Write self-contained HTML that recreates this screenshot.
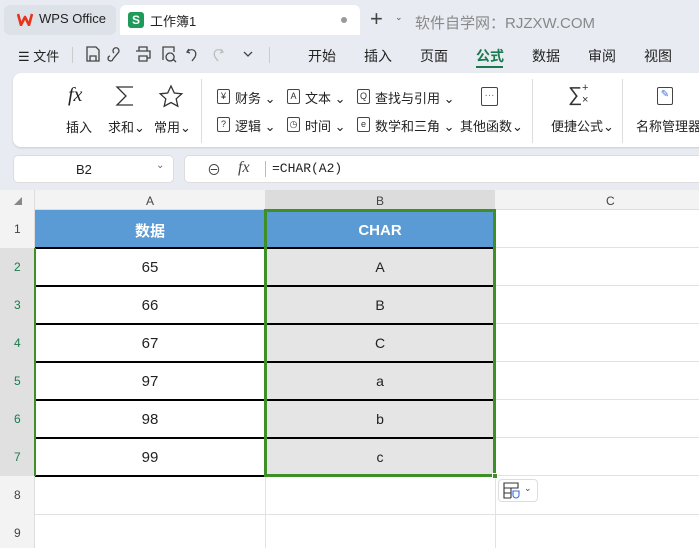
<!DOCTYPE html>
<html><head><meta charset="utf-8"><style>
*{box-sizing:border-box;margin:0;padding:0}
body{width:699px;height:548px;overflow:hidden;background:#e8ecf2;font-family:"Liberation Sans","Noto Sans CJK SC",sans-serif;position:relative;color:#222}
.a{position:absolute}
.t{font-size:13px;white-space:nowrap}
.cell{position:absolute;display:flex;align-items:center;justify-content:center;font-size:15px}
.ic{position:absolute;width:13px;height:15px;border:1px solid #444;border-radius:2px;font-size:9px;line-height:13px;text-align:center;color:#333}
</style></head><body>
<!-- tabs -->
<div class="a" style="left:4px;top:5px;width:112px;height:30px;background:#dde1e8;border-radius:6px"></div>
<svg class="a" style="left:17px;top:13px" width="16" height="13" viewBox="0 0 16 13"><path d="M1 1 L4 12 L8 4 L12 12 L15 1" fill="none" stroke="#e8341c" stroke-width="2.6" stroke-linejoin="round"/></svg>
<div class="a t" style="left:39px;top:11px;font-size:13px">WPS Office</div>
<div class="a" style="left:120px;top:5px;width:240px;height:30px;background:#fff;border-radius:6px 6px 0 0"></div>
<div class="a" style="left:128px;top:12px;width:16px;height:16px;background:#1f9a5a;border-radius:3px;color:#fff;font-size:12px;font-weight:bold;text-align:center;line-height:16px">S</div>
<div class="a t" style="left:150px;top:11px">工作簿1</div>
<div class="a" style="left:341px;top:17px;width:6px;height:6px;border-radius:3px;background:#999"></div>
<div class="a t" style="left:370px;top:6px;font-size:22px;color:#444">+</div>
<div class="a t" style="left:395px;top:12px;font-size:9px;color:#555">⌄</div>
<div class="a t" style="left:415px;top:12px;font-size:15px;color:#888">软件自学网：RJZXW.COM</div>
<!-- menu -->
<div class="a t" style="left:18px;top:46px">☰ 文件</div>
<div class="a" style="left:72px;top:47px;width:1px;height:16px;background:#ccc"></div>
<svg class="a" style="left:84px;top:44px" width="180" height="20" viewBox="0 0 180 20" fill="none" stroke="#444" stroke-width="1.3">
<path d="M3 3h9l3 3v11H3z M6 17v-5h6v5"/>
<path d="M30 9a3 3 0 1 1 4 0l-5 6a2.5 2.5 0 1 1-3-3"/>
<path d="M55 7V3h8v4 M52 7h14v7h-3 M55 12h8v5h-8z"/>
<path d="M79 16V3h11v5 M86 9a4 4 0 1 0 .1 0 M89 15l3 3"/>
<path d="M105 5l-2 3 3 1 M103 8c5-5 11-1 8 5l-3 4"/>
<path d="M137 5l2 3-3 1 M139 8c-5-5-11-1-8 5l3 4" stroke="#bbb"/>
<path d="M160 8l4 4 4-4"/>
</svg>
<div class="a" style="left:269px;top:47px;width:1px;height:16px;background:#ccc"></div>
<div class="a t" style="left:308px;top:46px;font-size:14px">开始</div>
<div class="a t" style="left:364px;top:46px;font-size:14px">插入</div>
<div class="a t" style="left:420px;top:46px;font-size:14px">页面</div>
<div class="a t" style="left:476px;top:46px;font-size:14px;font-weight:bold;color:#1a7a4c">公式</div>
<div class="a" style="left:476px;top:66px;width:27px;height:2px;background:#1a7a4c"></div>
<div class="a t" style="left:532px;top:46px;font-size:14px">数据</div>
<div class="a t" style="left:588px;top:46px;font-size:14px">审阅</div>
<div class="a t" style="left:644px;top:46px;font-size:14px">视图</div>
<!-- ribbon -->
<div class="a" style="left:13px;top:73px;width:700px;height:74px;background:#fff;border-radius:8px;box-shadow:0 1px 2px #ccc"></div>
<div class="a t" style="left:68px;top:84px;font-size:20px;font-style:italic;font-family:'Liberation Serif',serif">fx</div>
<svg class="a" style="left:114px;top:85px" width="22" height="22" viewBox="0 0 22 22" fill="none" stroke="#333" stroke-width="1.3"><path d="M19 2H3l9 9-9 9h16"/></svg>
<svg class="a" style="left:158px;top:84px" width="26" height="24" viewBox="0 0 26 24" fill="none" stroke="#333" stroke-width="1.3"><path d="M13 2l3.3 7 7.5.8-5.6 5 1.6 7.4L13 18.5l-6.8 3.7 1.6-7.4-5.6-5 7.5-.8z"/></svg>
<div class="a t" style="left:66px;top:117px">插入</div>
<div class="a t" style="left:108px;top:117px">求和⌄</div>
<div class="a t" style="left:154px;top:117px">常用⌄</div>
<div class="a" style="left:201px;top:79px;width:1px;height:64px;background:#ddd"></div>
<div class="ic" style="left:217px;top:89px">¥</div><div class="a t" style="left:235px;top:88px">财务 ⌄</div>
<div class="ic" style="left:287px;top:89px">A</div><div class="a t" style="left:305px;top:88px">文本 ⌄</div>
<div class="ic" style="left:357px;top:89px">Q</div><div class="a t" style="left:375px;top:88px">查找与引用 ⌄</div>
<div class="ic" style="left:217px;top:117px">?</div><div class="a t" style="left:235px;top:116px">逻辑 ⌄</div>
<div class="ic" style="left:287px;top:117px">◷</div><div class="a t" style="left:305px;top:116px">时间 ⌄</div>
<div class="ic" style="left:357px;top:117px">e</div><div class="a t" style="left:375px;top:116px">数学和三角 ⌄</div>
<div class="a" style="left:481px;top:87px;width:17px;height:19px;border:1px solid #444;border-radius:2px;color:#3a6fe0;font-size:10px;text-align:center;line-height:16px">···</div>
<div class="a t" style="left:460px;top:116px">其他函数⌄</div>
<div class="a" style="left:532px;top:79px;width:1px;height:64px;background:#ddd"></div>
<div class="a t" style="left:568px;top:84px;font-size:20px;color:#333">∑</div>
<div class="a t" style="left:582px;top:82px;font-size:11px;color:#333">+</div>
<div class="a t" style="left:582px;top:94px;font-size:11px;color:#333">×</div>
<div class="a t" style="left:551px;top:116px">便捷公式⌄</div>
<div class="a" style="left:622px;top:79px;width:1px;height:64px;background:#ddd"></div>
<div class="a" style="left:657px;top:87px;width:16px;height:18px;border:1px solid #444;border-radius:2px;color:#3a6fe0;font-size:10px;text-align:center;line-height:14px">✎</div>
<div class="a t" style="left:636px;top:116px">名称管理器</div>
<!-- formula bar -->
<div class="a" style="left:13px;top:155px;width:161px;height:28px;background:#fff;border:1px solid #ddd;border-radius:5px"></div>
<div class="a t" style="left:76px;top:162px">B2</div>
<div class="a t" style="left:156px;top:160px;font-size:10px;color:#666">⌄</div>
<div class="a" style="left:184px;top:155px;width:520px;height:28px;background:#fff;border:1px solid #ddd;border-radius:5px"></div>
<div class="a t" style="left:207px;top:160px;font-size:14px;color:#444">⊖</div>
<div class="a t" style="left:238px;top:159px;font-size:16px;font-style:italic;font-family:'Liberation Serif',serif;color:#444">fx</div>
<div class="a" style="left:265px;top:161px;width:1px;height:16px;background:#bbb"></div>
<div class="a t" style="left:272px;top:161px;font-family:'Liberation Mono',monospace;font-size:13px">=CHAR(A2)</div>
<!-- grid -->
<div class="a" style="left:0;top:190px;width:699px;height:358px;background:#fff"></div>
<div class="a" style="left:0;top:190px;width:699px;height:20px;background:#f3f3f3;border-bottom:1px solid #ddd"></div>
<div class="a" style="left:265px;top:190px;width:230px;height:20px;background:#dcdcdc"></div>
<div class="a" style="left:0;top:190px;width:35px;height:358px;background:#f3f3f3;border-right:1px solid #ddd"></div>
<div class="a" style="left:0;top:248px;width:35px;height:228px;background:#e0e0e0"></div>
<div class="a t" style="left:14px;top:196px;font-size:8px;color:#888">◢</div>
<div class="a t" style="left:146px;top:194px;font-size:12px;color:#444">A</div>
<div class="a t" style="left:376px;top:194px;font-size:12px;color:#444">B</div>
<div class="a t" style="left:606px;top:194px;font-size:12px;color:#444">C</div>
<!-- row numbers -->
<div class="a t" style="left:14px;top:222px;font-size:12px;color:#444">1</div>
<div class="a t" style="left:14px;top:260px;font-size:12px;color:#1a7a4c">2</div>
<div class="a t" style="left:14px;top:298px;font-size:12px;color:#1a7a4c">3</div>
<div class="a t" style="left:14px;top:336px;font-size:12px;color:#1a7a4c">4</div>
<div class="a t" style="left:14px;top:374px;font-size:12px;color:#1a7a4c">5</div>
<div class="a t" style="left:14px;top:412px;font-size:12px;color:#1a7a4c">6</div>
<div class="a t" style="left:14px;top:450px;font-size:12px;color:#1a7a4c">7</div>
<div class="a t" style="left:14px;top:488px;font-size:12px;color:#444">8</div>
<div class="a t" style="left:14px;top:526px;font-size:12px;color:#444">9</div>
<!-- gridlines -->
<div class="a" style="left:35px;top:514px;width:664px;height:1px;background:#e2e2e2"></div>
<div class="a" style="left:495px;top:247px;width:204px;height:1px;background:#e2e2e2"></div>
<div class="a" style="left:495px;top:248px;width:204px;height:228px;background:repeating-linear-gradient(to bottom,transparent 0 37px,#e2e2e2 37px 38px)"></div>
<div class="a" style="left:265px;top:476px;width:1px;height:72px;background:#e2e2e2"></div>
<div class="a" style="left:495px;top:476px;width:1px;height:72px;background:#e2e2e2"></div>
<!-- header row -->
<div class="cell" style="left:35px;top:210px;width:460px;height:38px;background:#5b9bd5"></div>
<div class="cell" style="left:35px;top:211px;width:230px;height:38px;color:#fff;font-weight:bold">数据</div>
<div class="cell" style="left:265px;top:211px;width:230px;height:38px;color:#fff;font-weight:bold">CHAR</div>
<!-- B data bg -->
<div class="a" style="left:265px;top:248px;width:230px;height:228px;background:#e5e5e5"></div>
<!-- data -->
<div class="cell" style="left:35px;top:248px;width:230px;height:38px">65</div>
<div class="cell" style="left:35px;top:286px;width:230px;height:38px">66</div>
<div class="cell" style="left:35px;top:324px;width:230px;height:38px">67</div>
<div class="cell" style="left:35px;top:362px;width:230px;height:38px">97</div>
<div class="cell" style="left:35px;top:400px;width:230px;height:38px">98</div>
<div class="cell" style="left:35px;top:438px;width:230px;height:38px">99</div>
<div class="cell" style="left:265px;top:248px;width:230px;height:38px;font-size:14px">A</div>
<div class="cell" style="left:265px;top:286px;width:230px;height:38px;font-size:14px">B</div>
<div class="cell" style="left:265px;top:324px;width:230px;height:38px;font-size:14px">C</div>
<div class="cell" style="left:265px;top:362px;width:230px;height:38px;font-size:14px">a</div>
<div class="cell" style="left:265px;top:400px;width:230px;height:38px;font-size:14px">b</div>
<div class="cell" style="left:265px;top:438px;width:230px;height:38px;font-size:14px">c</div>
<!-- black borders -->
<div class="a" style="left:35px;top:247px;width:460px;height:230px;background:repeating-linear-gradient(to bottom,#000 0 2px,transparent 2px 38px)"></div>
<div class="a" style="left:264px;top:210px;width:2px;height:267px;background:#000"></div>
<div class="a" style="left:35px;top:475px;width:230px;height:2px;background:#000"></div>
<!-- selection -->
<div class="a" style="left:264px;top:209px;width:232px;height:268px;border:3px solid #3f8f28"></div>
<div class="a" style="left:34px;top:248px;width:2px;height:228px;background:#3f8f28"></div>
<div class="a" style="left:492px;top:473px;width:6px;height:6px;background:#3f8f28;border:1px solid #fff"></div>
<!-- paste options -->
<div class="a" style="left:498px;top:479px;width:40px;height:23px;background:#fff;border:1px solid #ddd;border-radius:4px"></div>
<svg class="a" style="left:503px;top:482px" width="18" height="18" viewBox="0 0 18 18" fill="none" stroke="#333" stroke-width="1.1"><path d="M1 1h14v5H1z M1 6v10h7 M1 11h7 M8 6v10"/><path d="M10 9h6v4a3 3 0 0 1-6 0z" stroke="#3a6fe0" fill="#fff"/></svg>
<div class="a t" style="left:524px;top:483px;font-size:9px;color:#444">⌄</div>
</body></html>
